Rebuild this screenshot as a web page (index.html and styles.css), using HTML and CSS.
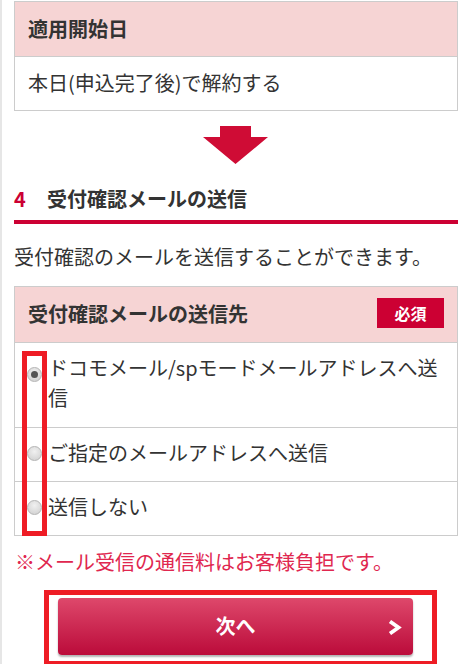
FILE: index.html
```html
<!DOCTYPE html>
<html lang="ja">
<head>
<meta charset="utf-8">
<title>受付確認メールの送信</title>
<link rel="stylesheet" href="styles.css">
</head>
<body>
<div class="page">
  <div class="tbl">
    <div class="tbl-head">適用開始日</div>
    <div class="tbl-row tbl-row--plain">本日(申込完了後)で解約する</div>
  </div>

  <div class="arrow">
    <svg width="66" height="39" viewBox="0 0 66 39"><path d="M17 0H48V11H65L32.5 38L0 11H17Z" fill="#cf0c35"/></svg>
  </div>

  <h2 class="step"><span class="step-num">4</span><span class="step-title">受付確認メールの送信</span></h2>

  <p class="desc">受付確認のメールを送信することができます。</p>

  <div class="tbl tbl--form">
    <div class="tbl-head tbl-head--split">
      <span>受付確認メールの送信先</span>
      <span class="badge">必須</span>
    </div>
    <label class="tbl-row opt">
      <span class="radio radio--checked radio--first"></span>
      <span class="opt-text">ドコモメール/spモードメールアドレスへ送信</span>
    </label>
    <label class="tbl-row opt">
      <span class="radio"></span>
      <span class="opt-text">ご指定のメールアドレスへ送信</span>
    </label>
    <label class="tbl-row opt">
      <span class="radio"></span>
      <span class="opt-text">送信しない</span>
    </label>
    <div class="mark mark--radios"></div>
  </div>

  <p class="note">※メール受信の通信料はお客様負担です。</p>

  <div class="btn-frame">
    <button class="btn" type="button">
      <span class="btn-label">次へ</span>
      <svg class="btn-chev" width="15" height="15" viewBox="0 0 15 15"><path d="M3 1.5L11.5 7.5L3 13.5" fill="none" stroke="#fff" stroke-width="3.8" stroke-linejoin="miter"/></svg>
    </button>
  </div>
</div>
</body>
</html>
```

FILE: styles.css
```css
* { box-sizing: border-box; }

html, body {
  margin: 0;
  padding: 0;
  background: #fff;
}

body {
  font-family: "Noto Sans CJK JP", "Noto Sans", sans-serif;
  color: #333;
  font-size: 20px;
  line-height: 30px;
}

.page {
  border-left: 2px solid #e6e6e6;
  padding: 1px 11px 0 12px;
  min-height: 664px;
}

.tbl {
  border: 1px solid #cccccc;
}

.tbl-head {
  background: #f6d4d4;
  font-weight: bold;
  height: 55px;
  padding: 12px 13px 0;
  border-bottom: 1px solid #cccccc;
}

.tbl-row {
  border-top: 1px solid #cccccc;
}

.tbl-head + .tbl-row { border-top: 0; }

.tbl-row--plain {
  height: 53px;
  padding: 11px 13px 0;
}

.arrow {
  display: flex;
  justify-content: center;
  margin-top: 15px;
  height: 38px;
}

.arrow svg { display: block; }

.step {
  margin: 20px 0 0;
  font-size: 20px;
  line-height: 30px;
  font-weight: bold;
  padding-bottom: 6px;
  border-bottom: 4px solid #cc0033;
  display: flex;
}

.step-num {
  color: #cc0033;
  width: 33px;
}

.desc {
  margin: 18px 0 0;
}

.tbl--form {
  margin-top: 14px;
  position: relative;
}

.tbl-head--split {
  display: flex;
  justify-content: space-between;
  align-items: flex-start;
  height: 56px;
}

.badge {
  background: #cc0033;
  color: #fff;
  font-size: 16px;
  line-height: 30px;
  width: 67px;
  height: 30px;
  text-align: center;
  margin-top: -1px;
}

.opt {
  display: flex;
  align-items: flex-start;
  padding: 10px 13px 13px 12px;
  gap: 6px;
  min-height: 54px;
}

.opt:first-of-type { padding-bottom: 14px; }

.opt-text { flex: 1; }

.radio {
  width: 15px;
  height: 15px;
  flex: none;
  border-radius: 50%;
  border: 1px solid #b4b4b4;
  background: radial-gradient(circle at 50% 35%, #f0f0f0 0%, #d8d8d8 70%, #cdcdcd 100%);
  margin-top: 8px;
  position: relative;
}

.radio--first { margin-top: 14px; }

.radio--checked::after {
  content: "";
  position: absolute;
  left: 3px;
  top: 3px;
  width: 7px;
  height: 7px;
  border-radius: 50%;
  background: #555;
}

.mark {
  position: absolute;
  border: 5px solid #ee1c25;
}

.mark--radios {
  left: 7px;
  top: 64px;
  width: 25px;
  height: 185px;
}

.note {
  margin: 11px 0 0;
  color: #e0274f;
  padding-left: 1px;
}

.btn-frame {
  margin: 13px 0 0 30px;
  width: 393px;
  border: 5px solid #ee1c25;
  padding: 3px 19px 6px 9px;
}

.btn {
  display: flex;
  align-items: center;
  justify-content: center;
  position: relative;
  width: 100%;
  height: 57px;
  border: 0;
  border-radius: 4px;
  background: linear-gradient(#de486b, #bb0b3a);
  box-shadow: 0 2px 2px rgba(0, 0, 0, 0.3);
  color: #fff;
  font-family: inherit;
  font-size: 20px;
  font-weight: bold;
  padding: 0;
}

.btn-label { line-height: 30px; margin-top: -1px; }

.btn-chev {
  position: absolute;
  right: 11px;
  top: 22px;
}
```
